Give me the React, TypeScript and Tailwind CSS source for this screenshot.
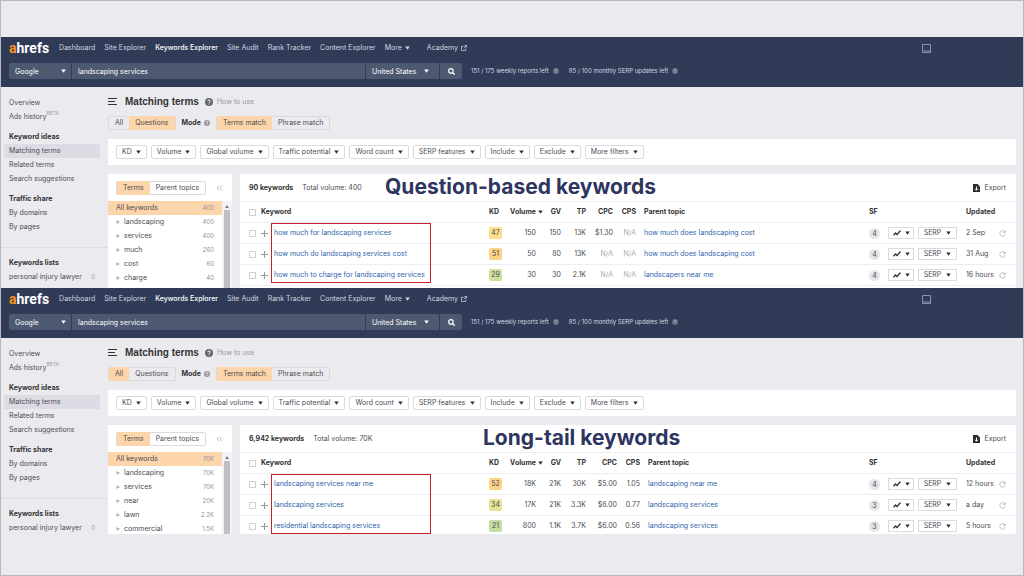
import { useId, useState } from "react";

interface IKeyword {
  keyword: string;
  kd: number;
  kdColor: string;
  volume: string;
  gv: string;
  tp: string;
  cpc: string;
  cps: string;
  parent: string;
  sf: number;
  updated: string;
}

interface IReport {
  title: string;
  titleClass: string;
  tab: "All" | "Questions";
  count: string;
  totalVolume: string;
  cpcClass: string;
  resultsClass: string;
  terms: { name: string; count: string }[];
  keywords: IKeyword[];
}

const reports: IReport[] = [
  {
    title: "Question-based keywords",
    titleClass: "left-[145px]",
    tab: "Questions",
    count: "90 keywords",
    totalVolume: "Total volume: 400",
    cpcClass: "w-[27px]",
    resultsClass: "min-h-[114px]",
    terms: [
      { name: "All keywords", count: "400" },
      { name: "landscaping", count: "400" },
      { name: "services", count: "400" },
      { name: "much", count: "260" },
      { name: "cost", count: "60" },
      { name: "charge", count: "40" },
    ],
    keywords: [
      {
        keyword: "how much for landscaping services",
        kd: 47,
        kdColor: "bg-[#fbe28a]",
        volume: "150",
        gv: "150",
        tp: "13K",
        cpc: "$1.30",
        cps: "N/A",
        parent: "how much does landscaping cost",
        sf: 4,
        updated: "2 Sep",
      },
      {
        keyword: "how much do landscaping services cost",
        kd: 51,
        kdColor: "bg-[#fdd385]",
        volume: "50",
        gv: "80",
        tp: "13K",
        cpc: "N/A",
        cps: "N/A",
        parent: "how much does landscaping cost",
        sf: 4,
        updated: "31 Aug",
      },
      {
        keyword: "how much to charge for landscaping services",
        kd: 29,
        kdColor: "bg-[#cfdf9f]",
        volume: "30",
        gv: "30",
        tp: "2.1K",
        cpc: "N/A",
        cps: "N/A",
        parent: "landscapers near me",
        sf: 4,
        updated: "16 hours",
      },
    ],
  },
  {
    title: "Long-tail keywords",
    titleClass: "left-[243px]",
    tab: "All",
    count: "6,942 keywords",
    totalVolume: "Total volume: 70K",
    cpcClass: "w-[31px]",
    resultsClass: "max-h-[109px]",
    terms: [
      { name: "All keywords", count: "70K" },
      { name: "landscaping", count: "70K" },
      { name: "services", count: "70K" },
      { name: "near", count: "20K" },
      { name: "lawn", count: "2.2K" },
      { name: "commercial", count: "1.5K" },
    ],
    keywords: [
      {
        keyword: "landscaping services near me",
        kd: 52,
        kdColor: "bg-[#fdd385]",
        volume: "18K",
        gv: "21K",
        tp: "30K",
        cpc: "$5.00",
        cps: "1.05",
        parent: "landscaping near me",
        sf: 4,
        updated: "12 hours",
      },
      {
        keyword: "landscaping services",
        kd: 34,
        kdColor: "bg-[#e6e495]",
        volume: "17K",
        gv: "21K",
        tp: "3.3K",
        cpc: "$6.00",
        cps: "0.77",
        parent: "landscaping services",
        sf: 3,
        updated: "a day",
      },
      {
        keyword: "residential landscaping services",
        kd: 21,
        kdColor: "bg-[#c5dda3]",
        volume: "800",
        gv: "1.1K",
        tp: "3.7K",
        cpc: "$6.00",
        cps: "0.56",
        parent: "landscaping services",
        sf: 3,
        updated: "5 hours",
      },
    ],
  },
];

const navItems = [
  "Dashboard",
  "Site Explorer",
  "Keywords Explorer",
  "Site Audit",
  "Rank Tracker",
  "Content Explorer",
];

const filters = [
  "KD",
  "Volume",
  "Global volume",
  "Traffic potential",
  "Word count",
  "SERP features",
  "Include",
  "Exclude",
  "More filters",
];

function Caret({ className = "" }: { className?: string }) {
  return (
    <svg viewBox="0 0 5 4" className={`h-1 w-[5px] shrink-0 ${className}`}>
      <path d="M.2.4h4.600L2.500 3.700z" fill="currentColor" />
    </svg>
  );
}

function Help({ className = "" }: { className?: string }) {
  return (
    <svg viewBox="0 0 16 16" className={`shrink-0 ${className}`}>
      <circle cx="8" cy="8" r="8" fill="currentColor" />
      <path
        d="M5.500 6.200c0-3.200 5-3.200 5 0 0 1.800-2.500 1.800-2.500 3.800M8 11.200v1.800"
        fill="none"
        stroke="#fff"
        strokeWidth="1.800"
      />
    </svg>
  );
}

function External() {
  return (
    <svg
      viewBox="0 0 12 12"
      className="size-[6px]"
      fill="none"
      stroke="currentColor"
      strokeWidth="1.500"
    >
      <path d="M5 2.500H1v8.700h8.500V7M7 1h4v4M11 1L5.500 6.500" />
    </svg>
  );
}

function Refresh() {
  return (
    <svg
      viewBox="0 0 14 14"
      className="size-[7px]"
      fill="none"
      stroke="currentColor"
      strokeWidth="1.500"
    >
      <path d="M11.500 3.500A5.500 5.500 0 1 0 12.500 8M12.500 1v4h-4" />
    </svg>
  );
}

function Header() {
  const id = useId();
  return (
    <header className="flex h-[50px] flex-col gap-[7px] bg-[#303b57] px-2 pt-[3px] text-[#d3d7e0]">
      <nav className="flex h-4 items-center">
        <a
          href="#"
          className="mr-[10px] font-['Roboto'] text-[14px] leading-4 font-bold text-white"
        >
          <span className="text-[#f7931e]">a</span>hrefs
        </a>
        <div className="flex items-center gap-[9px]">
          {navItems.map((item) => (
            <a
              key={item}
              href="#"
              className={
                item === "Keywords Explorer" ? "font-medium text-white" : ""
              }
            >
              {item}
            </a>
          ))}
          <button className="flex items-center gap-[3px]">
            More <Caret />
          </button>
          <a href="#" className="ml-2 flex items-center gap-[3px]">
            Academy <External />
          </a>
        </div>
        <button aria-label="Devices" className="mr-[84px] ml-auto">
          <svg viewBox="0 0 9 9" className="size-[9px] text-[#8b94a8]">
            <path
              d="M.5.5h8v8h-8zM.5 7h8"
              fill="none"
              stroke="currentColor"
            />
          </svg>
        </button>
      </nav>
      <form
        className="flex h-4 items-center"
        onSubmit={(e) => e.preventDefault()}
      >
        <div className="flex h-4 w-[453px] gap-px text-white">
          <div className="relative w-[62px]">
            <select
              id={`${id}-engine`}
              aria-label="Search engine"
              className="block h-4 w-full appearance-none rounded-l-xs bg-[#4d5871] pt-px pl-[6px]"
            >
              <option>Google</option>
            </select>
            <Caret className="pointer-events-none absolute top-[6px] right-[5px]" />
          </div>
          <input
            id={`${id}-query`}
            aria-label="Keywords"
            defaultValue="landscaping services"
            className="h-4 min-w-0 flex-1 bg-[#4d5871] px-[6px]"
          />
          <div className="relative w-[73px]">
            <select
              id={`${id}-country`}
              aria-label="Country"
              className="block h-4 w-full appearance-none bg-[#4d5871] pt-px pl-[6px]"
            >
              <option>United States</option>
            </select>
            <Caret className="pointer-events-none absolute top-[6px] right-[10px]" />
          </div>
          <button
            aria-label="Search"
            className="flex w-[22px] items-center justify-center rounded-r-xs bg-[#4d5871]"
          >
            <svg viewBox="0 0 12 12" className="size-[7px]" fill="none">
              <circle cx="5" cy="5" r="3.800" stroke="#fff" strokeWidth="2" />
              <path d="M8 8l3.500 3.500" stroke="#fff" strokeWidth="2.200" />
            </svg>
          </button>
        </div>
        <p className="ml-[9px] flex items-center gap-1 text-[6px]">
          151 / 175 weekly reports left
          <Help className="size-[6px] text-[#7d879c] opacity-70" />
        </p>
        <p className="ml-[10px] flex items-center gap-1 text-[6px]">
          85 / 100 monthly SERP updates left
          <Help className="size-[6px] text-[#7d879c] opacity-70" />
        </p>
      </form>
    </header>
  );
}

function Sidebar() {
  return (
    <aside className="w-[107px] shrink-0 pt-[9px]">
      <div className="flex flex-col pr-2 pl-[3px] leading-[14px] *:pl-[5px]">
        <a href="#">Overview</a>
        <a href="#">
          Ads history
          <sup className="-top-1 text-[5px] text-[#a0a0a8]">BETA</sup>
        </a>
        <h3 className="mt-[6px] font-bold text-[#333]">Keyword ideas</h3>
        <a href="#" className="bg-[#dcdce4]">
          Matching terms
        </a>
        <a href="#">Related terms</a>
        <a href="#">Search suggestions</a>
        <h3 className="mt-[6px] font-bold text-[#333]">Traffic share</h3>
        <a href="#">By domains</a>
        <a href="#">By pages</a>
      </div>
      <div className="mt-[13px] flex flex-col gap-[2px] border-t border-[#dcdce2] pt-[9px] pr-[13px] pl-2">
        <h3 className="font-bold text-[#333]">Keywords lists</h3>
        <a href="#" className="flex justify-between">
          personal injury lawyer
          <span className="text-[6px] text-[#999]">0</span>
        </a>
      </div>
    </aside>
  );
}

function Toggle({
  options,
  value,
  onChange,
}: {
  options: string[];
  value: string;
  onChange: (v: string) => void;
}) {
  return (
    <div className="flex h-[14px] rounded-xs border border-[#d9d9df]">
      {options.map((option) => (
        <button
          key={option}
          aria-pressed={option === value}
          onClick={() => onChange(option)}
          className={`-my-px px-[6px] ${option === value ? "bg-[#fdd5ab]" : ""}`}
        >
          {option}
        </button>
      ))}
    </div>
  );
}

function TermsPanel({ terms }: { terms: IReport["terms"] }) {
  const [view, setView] = useState("Terms");
  return (
    <section className="flex w-[124px] shrink-0 flex-col bg-white">
      <div className="flex h-[27px] shrink-0 items-center justify-between pr-[9px] pl-2">
        <Toggle
          options={["Terms", "Parent topics"]}
          value={view}
          onChange={setView}
        />
        <button aria-label="Collapse" className="text-[#b5b5bb]">
          <svg
            viewBox="0 0 12 10"
            className="h-[6px] w-[7px]"
            fill="none"
            stroke="currentColor"
            strokeWidth="1.500"
          >
            <path d="M5.500 1l-4 4 4 4M10.500 1l-4 4 4 4" />
          </svg>
        </button>
      </div>
      <div className="flex flex-1">
        <ul className="flex-1 leading-[14px]">
          {terms.map((term, i) => (
            <li
              key={term.name}
              className={`flex items-center pr-2 pl-2 ${i === 0 ? "bg-[#fdd5ab]" : ""}`}
            >
              {i > 0 && (
                <svg viewBox="0 0 4 4" className="mr-1 size-1 text-[#b0b0b6]">
                  <path d="M.5 0L4 2 .5 4z" fill="currentColor" />
                </svg>
              )}
              <span>{term.name}</span>
              <span className="ml-auto text-[6px] text-[#909096]">
                {term.count}
              </span>
            </li>
          ))}
        </ul>
        <div className="flex w-[10px] flex-col items-center bg-[#f3f3f5] pt-1">
          <svg viewBox="0 0 5 4" className="h-[3px] w-1 text-[#777]">
            <path d="M0 4h5L2.500 0z" fill="currentColor" />
          </svg>
          <div className="mt-[2px] w-[6px] flex-1 bg-[#c0c0c3]" />
        </div>
      </div>
    </section>
  );
}

function KeywordTable({ report }: { report: IReport }) {
  return (
    <div className="relative">
      <table className="w-full table-fixed border-t border-[#eeeef2] text-left whitespace-nowrap *:*:h-[21px] *:*:border-b *:*:border-[#eeeef2]">
        <thead className="text-[#333]">
          <tr>
            <th className="w-[21px] pl-[9px]">
              <input
                type="checkbox"
                aria-label="Select all"
                className="block size-[7px] appearance-none border border-[#cfcfd6] bg-white"
              />
            </th>
            <th className="w-[228px]">Keyword</th>
            <th className="w-[20px]">KD</th>
            <th className="w-[34px]">
              <span className="flex items-center justify-end gap-[2px]">
                Volume <Caret />
              </span>
            </th>
            <th className="w-[18px] text-right">GV</th>
            <th className="w-[25px] text-right">TP</th>
            <th className={`text-right ${report.cpcClass}`}>CPC</th>
            <th className="w-[23px] text-right">CPS</th>
            <th className="pl-2">Parent topic</th>
            <th className="w-[19px]">SF</th>
            <th className="w-[30px]" aria-label="Trend" />
            <th className="w-[48px]" aria-label="SERP" />
            <th className="w-[33px]">Updated</th>
            <th className="w-[17px]" aria-label="Refresh" />
          </tr>
        </thead>
        <tbody>
          {report.keywords.map((row) => (
            <tr key={row.keyword}>
              <td className="pl-[9px]">
                <input
                  type="checkbox"
                  aria-label={row.keyword}
                  className="block size-[7px] appearance-none border border-[#cfcfd6] bg-white"
                />
              </td>
              <td>
                <span className="flex items-center gap-[6px]">
                  <button aria-label="Add to list" className="text-[#999]">
                    <svg
                      viewBox="0 0 7 7"
                      className="size-[7px]"
                      stroke="currentColor"
                    >
                      <path d="M3.500 0v7M0 3.500h7" />
                    </svg>
                  </button>
                  <a href="#" className="text-[#2f5fae]">
                    {row.keyword}
                  </a>
                </span>
              </td>
              <td>
                <span
                  className={`block w-[13px] rounded-xs text-center leading-3 ${row.kdColor}`}
                >
                  {row.kd}
                </span>
              </td>
              <td className="pr-[7px] text-right">{row.volume}</td>
              <td className="text-right">{row.gv}</td>
              <td className="text-right">{row.tp}</td>
              <td
                className={`text-right ${row.cpc === "N/A" ? "text-[#aaa]" : ""}`}
              >
                {row.cpc}
              </td>
              <td
                className={`text-right ${row.cps === "N/A" ? "text-[#aaa]" : ""}`}
              >
                {row.cps}
              </td>
              <td className="pl-2">
                <a href="#" className="text-[#2f5fae]">
                  {row.parent}
                </a>
              </td>
              <td>
                <span className="block size-[11px] rounded-full bg-[#e6e5e9] text-center leading-[11px]">
                  {row.sf}
                </span>
              </td>
              <td>
                <button
                  aria-label="Trend"
                  className="flex h-3 w-[26px] items-center justify-center gap-1 border border-[#dadae0] text-[#333]"
                >
                  <svg
                    viewBox="0 0 16 12"
                    className="h-[6px] w-2"
                    fill="none"
                    stroke="currentColor"
                    strokeWidth="2.500"
                  >
                    <path d="M1 10.500l4-4.500 3 3 6.500-7.500M10.500 6l4.500-4.500" />
                  </svg>
                  <Caret />
                </button>
              </td>
              <td>
                <button className="flex h-3 w-[39px] items-center justify-center gap-[5px] border border-[#dadae0]">
                  SERP <Caret className="text-[#333]" />
                </button>
              </td>
              <td>{row.updated}</td>
              <td>
                <button aria-label="Refresh" className="block text-[#aaa]">
                  <Refresh />
                </button>
              </td>
            </tr>
          ))}
        </tbody>
      </table>
      {/* highlight around the keyword column */}
      <div className="pointer-events-none absolute top-[22px] left-[31px] h-[60px] w-[160px] border border-[#c8202c]" />
    </div>
  );
}

function Report({ report }: { report: IReport }) {
  const [tab, setTab] = useState<string>(report.tab);
  const [mode, setMode] = useState("Terms match");

  return (
    <div>
      <Header />
      <div className="flex">
        <Sidebar />
        <main className="min-w-0 flex-1 pt-2 pr-[7px]">
          <div className="flex h-[14px] items-center">
            <button aria-label="Menu">
              <svg
                viewBox="0 0 9 8"
                className="h-2 w-[9px] text-[#333]"
                stroke="currentColor"
              >
                <path d="M0 .5h9M0 3.500h7M0 6.500h9" />
              </svg>
            </button>
            <h1 className="ml-2 font-['Liberation_Sans'] text-[10px] font-bold text-[#333]">
              Matching terms
            </h1>
            <a
              href="#"
              className="ml-[6px] flex items-center gap-1 text-[#98989e]"
            >
              <Help className="size-2 text-[#66666c]" />
              How to use
            </a>
          </div>
          <div className="mt-[7px] flex items-center">
            <Toggle
              options={["All", "Questions"]}
              value={tab}
              onChange={setTab}
            />
            <span className="mr-[3px] ml-[6px] font-bold text-[#333]">Mode</span>
            <Help className="mr-[6px] size-[6px] text-[#98989e]" />
            <Toggle
              options={["Terms match", "Phrase match"]}
              value={mode}
              onChange={setMode}
            />
          </div>
          <div className="mt-[9px] flex gap-1 bg-white px-2 py-[6px]">
            {filters.map((filter) => (
              <button
                key={filter}
                className="flex h-[14px] items-center gap-1 rounded-xs border border-[#dadae0] px-[5px]"
              >
                {filter} <Caret className="text-[#333]" />
              </button>
            ))}
          </div>
          <div
            className={`mt-[9px] flex gap-2 overflow-hidden ${report.resultsClass}`}
          >
            <TermsPanel terms={report.terms} />
            <section className="min-w-0 flex-1 bg-white">
              <div className="relative flex h-[27px] items-center pr-[10px] pl-[9px]">
                <span className="font-bold text-[#333]">{report.count}</span>
                <span className="ml-[9px]">{report.totalVolume}</span>
                <h2
                  className={`absolute top-0 text-[21px] leading-[26px] font-bold text-[#2e3560] ${report.titleClass}`}
                >
                  {report.title}
                </h2>
                <button className="ml-auto flex items-center gap-1">
                  <svg viewBox="0 0 14 16" className="h-2 w-[7px]">
                    <path d="M0 0h9l5 5v11H0z" fill="#2c2c30" />
                    <path
                      d="M7 5v7M4 9.500l3 3 3-3"
                      fill="none"
                      stroke="#fff"
                      strokeWidth="2"
                    />
                  </svg>
                  Export
                </button>
              </div>
              <KeywordTable report={report} />
            </section>
          </div>
        </main>
      </div>
    </div>
  );
}

function App() {
  return (
    <div className="min-h-screen border border-[#b9b8bf] bg-[#ebeaef] pt-9 font-['Inter',sans-serif] text-[7px] leading-3 text-[#4c4c52]">
      {reports.map((report) => (
        <Report key={report.title} report={report} />
      ))}
    </div>
  );
}

export default App;
